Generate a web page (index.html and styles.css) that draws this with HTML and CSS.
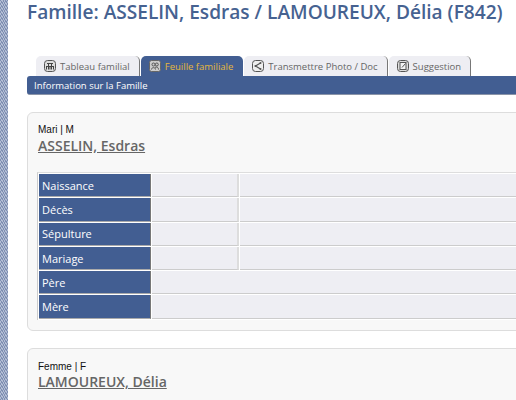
FILE: index.html
```html
<!DOCTYPE html>
<html>
<head>
    <meta charset="utf-8">
    <title>Famille: ASSELIN, Esdras / LAMOUREUX, Délia (F842)</title>
    <link rel="stylesheet" href="styles.css">
</head>
<body>
    <div class="side-strip"></div>
    <div class="page">
        <h1 class="title">Famille: ASSELIN, Esdras / LAMOUREUX, Délia (F842)</h1>

        <ul class="tabs">
            <li class="tab">
                <svg class="tab-icon" viewBox="0 0 12 12"><rect x="0.5" y="0.5" width="11" height="11" rx="3" fill="#ddd" stroke="#555"/><path d="M2.5 9.5V6M4.5 9.5V4M6 9.5V6M7.5 9.5V4M9.5 9.5V6M2 6.5H10M3 3.5H9" stroke="#444" stroke-width="1" fill="none"/></svg>
                Tableau familial
            </li>
            <li class="tab active">
                <svg class="tab-icon" viewBox="0 0 12 12"><rect x="0.5" y="0.5" width="11" height="11" rx="2" fill="#ccc" stroke="#666"/><circle cx="4.5" cy="4.5" r="1.5" fill="none" stroke="#555"/><circle cx="7.8" cy="4.5" r="1.5" fill="none" stroke="#555"/><path d="M2.5 9.5C2.5 7 6.5 7 6.5 9.5M6 7.3C8 6.6 9.5 7.5 9.5 9.5" fill="none" stroke="#555"/></svg>
                Feuille familiale
            </li>
            <li class="tab">
                <svg class="tab-icon" viewBox="0 0 12 12"><rect x="0.5" y="0.5" width="11" height="11" rx="3" fill="#eee" stroke="#555"/><path d="M8.5 3L3.5 6L8.5 9" fill="none" stroke="#555" stroke-width="1.2"/><circle cx="8.5" cy="3" r="1" fill="#555"/><circle cx="3.5" cy="6" r="1" fill="#555"/><circle cx="8.5" cy="9" r="1" fill="#555"/></svg>
                Transmettre Photo / Doc
            </li>
            <li class="tab">
                <svg class="tab-icon" viewBox="0 0 12 12"><rect x="0.5" y="0.5" width="11" height="11" rx="3" fill="#ddd" stroke="#555"/><rect x="3" y="2.5" width="6" height="7" fill="#f4f4f4" stroke="#555"/><path d="M5 7.5L8.5 3.5" stroke="#555"/></svg>
                Suggestion
            </li>
        </ul>
        <div class="tab-bar">Information sur la Famille</div>

        <section class="card">
            <div class="role">Mari | M</div>
            <a class="person" href="#">ASSELIN, Esdras</a>
            <table class="facts">
                <tr><th>Naissance</th><td></td><td class="wide"></td></tr>
                <tr><th>Décès</th><td></td><td class="wide"></td></tr>
                <tr><th>Sépulture</th><td></td><td class="wide"></td></tr>
                <tr><th>Mariage</th><td></td><td class="wide"></td></tr>
                <tr><th>Père</th><td colspan="2"></td></tr>
                <tr><th>Mère</th><td colspan="2"></td></tr>
            </table>
        </section>

        <section class="card">
            <div class="role">Femme | F</div>
            <a class="person" href="#">LAMOUREUX, Délia</a>
        </section>
    </div>
</body>
</html>
```

FILE: styles.css
```css
* { box-sizing: border-box; margin: 0; padding: 0; }
html, body { height: 400px; overflow: hidden; }
body {
    display: flex;
    background: white;
    font-family: 'Open Sans', sans-serif;
    color: #333;
}
.side-strip {
    flex: 0 0 8px;
    background: repeating-linear-gradient(60deg, #7f8fb2 0, #7f8fb2 1px, #b4bed4 1px, #b4bed4 2px);
}
.page {
    flex: 0 0 560px;
    margin-left: 19px;
}
.title {
    height: 56px;
    font-size: 19.1px;
    font-weight: 600;
    line-height: 25px;
    color: #466291;
}
.tabs {
    display: flex;
    list-style: none;
    height: 20px;
    padding-left: 9px;
    gap: 1px;
}
.tab {
    display: flex;
    align-items: center;
    gap: 4px;
    padding: 0 9px 0 8px;
    font-size: 9.5px;
    color: #666;
    background: #eeeef3;
    border-radius: 5px 5px 0 0;
    border-right: 1px solid #777;
    white-space: nowrap;
}
.tab.active {
    padding-right: 10px;
    background: #425e92;
    color: #e5b73b;
    border-right: none;
}
.tab-icon { width: 12px; height: 12px; flex: none; }
.tab-bar {
    height: 19px;
    padding-left: 7px;
    font-size: 9.5px;
    line-height: 19px;
    color: white;
    background: #425e92;
    border-radius: 3px 0 0 3px;
    border-bottom: 1px solid #8a94a8;
}
.card {
    margin-top: 17px;
    padding: 10px 9px;
    background: #f8f8f8;
    border: 1px solid #ddd;
    border-radius: 6px;
    height: 219px;
}
.card + .card { height: 80px; }
.role {
    font-family: 'Liberation Sans', sans-serif;
    font-size: 10px;
    line-height: 13px;
    color: #111;
    padding-left: 1px;
}
.card + .card .role { padding-top: 1px; height: 13px; }
.person {
    display: block;
    padding-left: 1px;
    font-size: 14px;
    font-weight: 600;
    line-height: 19px;
    color: #666;
    text-decoration: underline;
}
.facts {
    margin-top: 17px;
    width: 100%;
    table-layout: fixed;
    border-collapse: separate;
    border-spacing: 1px;
    background: white;
    border-top: 1px solid #ddd;
    border-left: 1px solid #ccc;
}
.facts th {
    width: 112px;
    height: 23.3px;
    padding-left: 3px;
    text-align: left;
    font-size: 11px;
    font-weight: 400;
    color: white;
    background: #425e92;
    border-right: 1px solid #777;
    border-bottom: 1px solid #aaa;
}
.facts td {
    width: 87px;
    background: #eeeef3;
    border-right: 2px solid #ddd;
    border-bottom: 1px solid #ccc;
}
.facts td.wide { width: auto; }
```
